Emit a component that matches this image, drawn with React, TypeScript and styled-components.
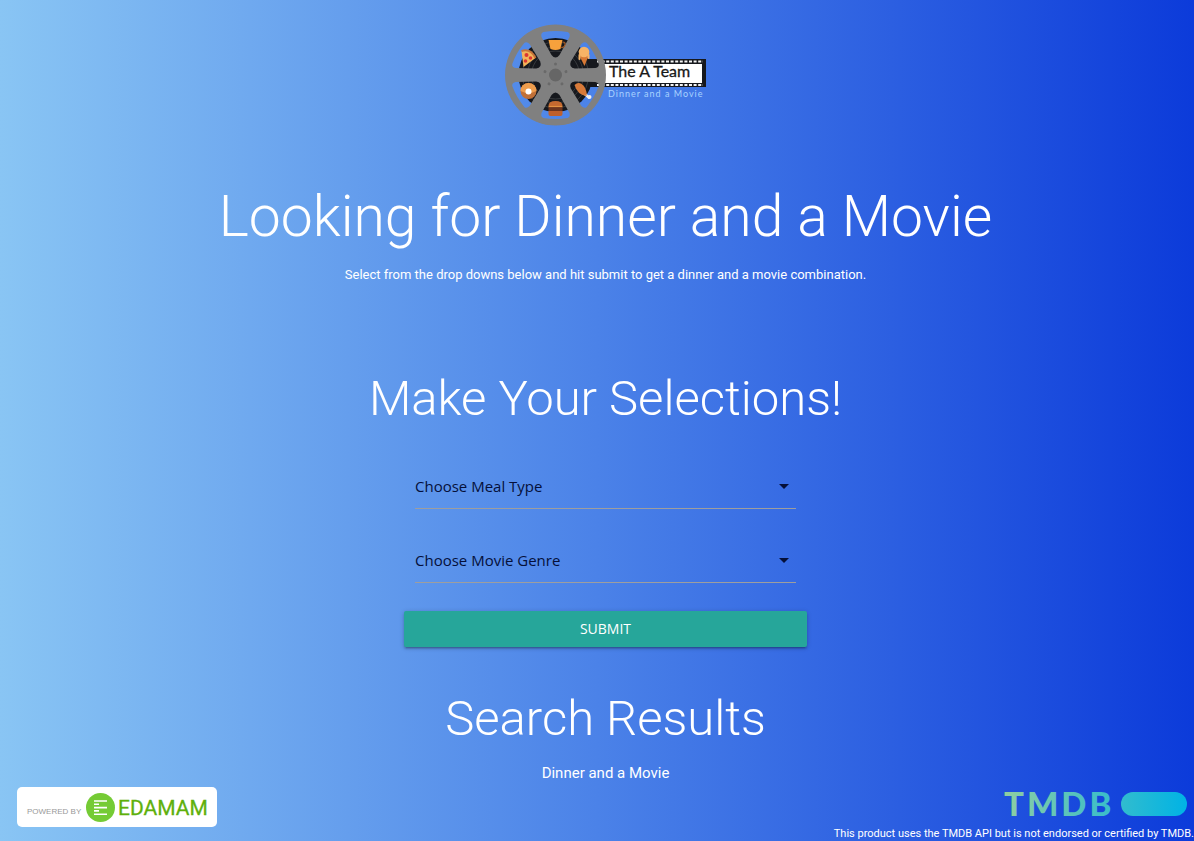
import React from "react";
import styled, { createGlobalStyle } from "styled-components";

const display = `Roboto, "Open Sans", sans-serif`;

const GlobalStyle = createGlobalStyle`
  * { box-sizing: border-box; }
  body {
    margin: 0;
    font-family: ${display};
    color: #fff;
  }
`;

const Page = styled.div`
  min-height: 100vh;
  display: flex;
  flex-direction: column;
  justify-content: space-between;
  background: linear-gradient(to right, #89c5f4, #4b82e8 50%, #0c3bda);
`;

const Main = styled.main`
  display: flex;
  flex-direction: column;
  align-items: center;
  padding: 23px 0 0 17px;
  text-align: center;
`;

const Logo = styled.svg`
  display: block;
  width: 202px;
  height: 104px;
`;

const Title = styled.h1`
  margin: 50px 0 8px;
  font-size: 57px;
  font-weight: 300;
  line-height: 80px;
`;

const Subtitle = styled.h2`
  margin: 0 0 12px;
  font-size: 49px;
  font-weight: 300;
  line-height: 64px;
`;

const Text = styled.p<{ $size: number }>`
  margin: 0;
  font-size: ${(p) => p.$size}px;
  line-height: 20px;
`;

const Intro = styled.section`
  margin-bottom: 82px;
`;

const Form = styled.form`
  display: flex;
  flex-direction: column;
  width: 403px;
  max-width: 100%;
  margin: 22px 0 40px;
`;

const Field = styled.label`
  display: grid;
  grid-template-columns: 1fr 24px;
  align-items: start;
  height: 44px;
  margin: 0 11px;
  border-bottom: 1px solid #9e9e9e;

  & + & {
    margin-top: 30px;
  }
`;

const Select = styled.select`
  grid-area: 1 / 1 / 2 / 3;
  width: 100%;
  height: 42px;
  padding: 0;
  border: 0;
  outline: 0;
  background: transparent;
  appearance: none;
  color: #05103a;
  font: 15px "Open Sans", sans-serif;
`;

const Caret = styled.svg`
  grid-area: 1 / 2 / 2 / 3;
  width: 24px;
  height: 42px;
  pointer-events: none;
`;

const Submit = styled.button`
  height: 36px;
  margin-top: 28px;
  padding: 0 0 2px;
  border: 0;
  border-radius: 2px;
  background: #26a69a;
  box-shadow: 0 2px 2px rgba(0, 0, 0, 0.14), 0 3px 1px -2px rgba(0, 0, 0, 0.12),
    0 1px 5px rgba(0, 0, 0, 0.2);
  color: #fff;
  font: 14px "Open Sans", sans-serif;
  text-transform: uppercase;
`;

const Footer = styled.footer`
  display: flex;
  justify-content: space-between;
  align-items: flex-end;
  padding-left: 17px;
`;

const Edamam = styled.a`
  display: flex;
  align-items: center;
  width: 200px;
  height: 40px;
  margin-bottom: 14px;
  padding: 0 8px 0 9px;
  border-radius: 5px;
  background: #fff;
`;

const Tmdb = styled.div`
  display: flex;
  flex-direction: column;
  align-items: flex-end;
`;

const TmdbLink = styled.a`
  display: block;
  height: 44px;
  margin-right: 7px;
`;

const Notice = styled.p`
  margin: 0;
  font-size: 11px;
  line-height: 14px;
`;

const spokes = [0, 60, 120, 180, 240, 300];

function ReelLogo() {
  return (
    <Logo viewBox="0 0 202 104" role="img" aria-label="The A Team, Dinner and a Movie">
      <defs>
        <mask id="reel">
          <circle r="51" fill="#fff" />
          {spokes.map((a) => (
            <path
              key={a}
              transform={`rotate(${a})`}
              d="M-14-38Q-15-42-12-43Q0-45 12-43Q15-42 14-38L4-20Q0-15-4-20Z"
              fill="#000"
            />
          ))}
        </mask>
      </defs>
      <path d="M82 36H201V64H82Z" fill="#16181d" />
      <path d="M92 38.500H198M92 62H198" stroke="#f4f4f4" strokeWidth="2" strokeDasharray="3 1.600" />
      <rect x="96" y="41" width="101" height="19" fill="#fff" />
      <g transform="translate(50.500 52)">
        <circle r="37" fill="#16181d" />
        <g fill="none" stroke="#45474b" strokeWidth=".7">
          <circle r="33" />
          <circle r="28" />
          <circle r="24" />
        </g>
        <circle r="50.500" fill="#808080" mask="url(#reel)" />
        <circle r="6.500" fill="#666" />
        {[0, 72, 144, 216, 288].map((a) => (
          <circle key={a} cy="-11" r="1.500" fill="#696969" transform={`rotate(${a})`} />
        ))}
        {/* coffee cup */}
        <path d="M-7-35H7L5-26Q0-24-5-26Z" fill="#f7a13c" />
        <path d="M7-33Q11-33 9-29Q8-27 5-28" fill="none" stroke="#a65a22" strokeWidth="1.200" />
        {/* pizza */}
        <path d="M-34-24Q-25-27-20-17L-32-8Z" fill="#f3b45a" />
        <path d="M-34-24Q-25-27-20-17" fill="none" stroke="#c8743a" strokeWidth="2" />
        <g fill="#dc3832">
          <circle cx="-29" cy="-20" r="2" />
          <circle cx="-25" cy="-17" r="1.800" />
          <circle cx="-30" cy="-14" r="1.800" />
        </g>
        {/* ice cream */}
        <path d="M24-19H33L29-9Z" fill="#d87935" />
        <circle cx="28.500" cy="-23" r="5.300" fill="#f7b366" />
        <path d="M24-20V-16M33-20V-17" stroke="#f7b366" strokeWidth="2" strokeLinecap="round" />
        {/* doughnut */}
        <circle cx="-27" cy="16" r="8" fill="#c07038" />
        <path d="M-35 16A8 8 0 0 1-19 16L-27 19Z" fill="#ee9d4d" />
        <circle cx="-27" cy="16.500" r="3" fill="#fff" />
        {/* burger */}
        <path d="M-7 31Q-7 26 0 26Q7 26 7 31Z" fill="#c56930" />
        <rect x="-7" y="32" width="14" height="4" fill="#6e351e" />
        <path d="M-7 31.500H7" stroke="#e39242" strokeWidth="1.200" />
        <path d="M-7 36H7V39Q7 41 5 41H-5Q-7 41-7 39Z" fill="#bf602c" />
        {/* drumstick */}
        <path d="M28 18L34 23" stroke="#f1eef0" strokeWidth="2.500" />
        <circle cx="34" cy="22" r="2" fill="#f1eef0" />
        <path d="M19 10Q24 5 29 12Q32 18 31 21Q22 20 19 10Z" fill="#d87a39" />
      </g>
      <text x="104" y="54" fontFamily="Lato, sans-serif" fontSize="16" fill="#181818" stroke="#181818" strokeWidth=".3">
        The A Team
      </text>
      <text x="103" y="74" fontFamily="Lato, sans-serif" fontSize="9" letterSpacing="1" fill="#a9d3ff">
        Dinner and a Movie
      </text>
    </Logo>
  );
}

function EdamamLogo() {
  return (
    <svg width="183" height="32" viewBox="0 0 183 32" role="img" aria-label="Powered by Edamam">
      <text x="1" y="23" fontFamily="Liberation Sans, sans-serif" fontSize="8" fill="#999">
        POWERED BY
      </text>
      <circle cx="74.500" cy="16.500" r="14.500" fill="#75cb35" />
      <path
        d="M68 10H81M68 13.300H73M68 16.600H81M68 19.900H73M68 23.200H81"
        stroke="#fff"
        strokeWidth="1.600"
        fill="none"
      />
      <text x="92" y="24" fontFamily="Roboto, sans-serif" fontSize="21" fill="#5eb00c" stroke="#5eb00c" strokeWidth=".3">
        EDAMAM
      </text>
    </svg>
  );
}

function TmdbLogo() {
  return (
    <svg width="183" height="42" viewBox="0 0 183 42" role="img" aria-label="TMDB">
      <defs>
        <linearGradient id="tmdb" gradientUnits="userSpaceOnUse" x1="0" x2="183" y1="0" y2="0">
          <stop stopColor="#90cea1" />
          <stop offset=".56" stopColor="#3cbec9" />
          <stop offset="1" stopColor="#00b3e5" />
        </linearGradient>
      </defs>
      <text x="0" y="33" fontFamily="Lato, sans-serif" fontSize="33" fontWeight="900" letterSpacing="3" fill="url(#tmdb)">
        TMDB
      </text>
      <rect x="117" y="9" width="66" height="24" rx="12" fill="url(#tmdb)" />
    </svg>
  );
}

function Dropdown({ label, options }: { label: string; options: string[] }) {
  return (
    <Field>
      <Select aria-label={label} defaultValue="">
        <option value="" disabled>
          {label}
        </option>
        {options.map((o) => (
          <option key={o}>{o}</option>
        ))}
      </Select>
      <Caret viewBox="0 0 24 24" aria-hidden="true">
        <path d="M7 10l5 5 5-5z" fill="#05103a" />
      </Caret>
    </Field>
  );
}

export default function App() {
  return (
    <Page>
      <GlobalStyle />
      <Main>
        <ReelLogo />
        <Intro>
          <Title>Looking for Dinner and a Movie</Title>
          <Text $size={13}>
            Select from the drop downs below and hit submit to get a dinner and a movie combination.
          </Text>
        </Intro>
        <Subtitle>Make Your Selections!</Subtitle>
        <Form onSubmit={(e) => e.preventDefault()}>
          <Dropdown label="Choose Meal Type" options={["Breakfast", "Lunch", "Dinner"]} />
          <Dropdown label="Choose Movie Genre" options={["Action", "Comedy", "Drama"]} />
          <Submit type="submit">Submit</Submit>
        </Form>
        <Subtitle>Search Results</Subtitle>
        <Text $size={15}>Dinner and a Movie</Text>
      </Main>
      <Footer>
        <Edamam href="#edamam">
          <EdamamLogo />
        </Edamam>
        <Tmdb>
          <TmdbLink href="#tmdb">
            <TmdbLogo />
          </TmdbLink>
          <Notice>This product uses the TMDB API but is not endorsed or certified by TMDB.</Notice>
        </Tmdb>
      </Footer>
    </Page>
  );
}
